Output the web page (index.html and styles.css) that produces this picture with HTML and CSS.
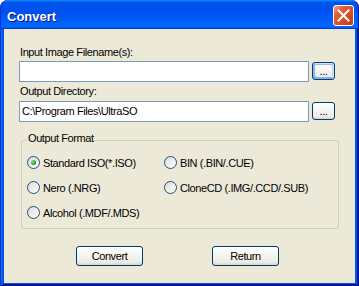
FILE: index.html
```html
<!DOCTYPE html>
<html>
<head>
<meta charset="utf-8">
<title>Convert</title>
<link rel="stylesheet" href="styles.css">
</head>
<body>
<div class="window">
  <div class="titlebar">
    <span class="title">Convert</span>
    <button class="close" aria-label="Close">
      <svg width="19" height="19" viewBox="0 0 19 19"><path d="M4.5 4.5 L14.5 14.5 M14.5 4.5 L4.5 14.5" stroke="#fff" stroke-width="2" stroke-linecap="square" fill="none"/></svg>
    </button>
  </div>
  <div class="frame">
    <div class="client">
      <div class="label l1">Input Image Filename(s):</div>
      <div class="field-row">
        <div class="textbox"></div>
        <button class="btn browse focused">...</button>
      </div>
      <div class="label l2">Output Directory:</div>
      <div class="field-row">
        <div class="textbox">C:\Program Files\UltraSO</div>
        <button class="btn browse">...</button>
      </div>
      <fieldset class="group">
        <legend>Output Format</legend>
        <div class="options">
          <label class="option"><span class="radio checked"></span>Standard ISO(*.ISO)</label>
          <label class="option"><span class="radio"></span>BIN (.BIN/.CUE)</label>
          <label class="option"><span class="radio"></span>Nero (.NRG)</label>
          <label class="option"><span class="radio"></span>CloneCD (.IMG/.CCD/.SUB)</label>
          <label class="option"><span class="radio"></span>Alcohol (.MDF/.MDS)</label>
        </div>
      </fieldset>
      <div class="actions">
        <button class="btn action">Convert</button>
        <button class="btn action">Return</button>
      </div>
    </div>
  </div>
</div>
</body>
</html>
```

FILE: styles.css
```css
body {
  margin: 0;
  background: #fff;
  font-family: "Liberation Sans", Arial, sans-serif;
  font-size: 11px;
  color: #000;
}

.window {
  width: 359px;
  height: 286px;
  display: flex;
  flex-direction: column;
}

.titlebar {
  flex: none;
  height: 29px;
  box-sizing: border-box;
  display: flex;
  justify-content: space-between;
  align-items: flex-start;
  padding: 0 5px 0 7px;
  border-radius: 8px 8px 0 0;
  background: linear-gradient(180deg, #0997ff, #0053ee 8%, #0050ee 40%, #0066ff 88%, #0066ff 93%, #005bff 95%, #003dd7 96%, #003dd7);
  box-shadow: inset 1px 0 #0831d9, inset -1px 0 #001ea0;
}

.title {
  margin-top: 9px;
  font-family: "Liberation Sans", Arial, sans-serif;
  font-weight: bold;
  font-size: 13px;
  line-height: 15px;
  color: #fff;
  text-shadow: 1px 1px #0f1089;
}

.close {
  margin-top: 5px;
  width: 21px;
  height: 21px;
  padding: 0;
  box-sizing: border-box;
  border: 1px solid #fff;
  border-radius: 3px;
  background: linear-gradient(135deg, #f0a58c 0%, #e2603a 28%, #d94a22 65%, #c23a14 100%);
  display: flex;
  align-items: center;
  justify-content: center;
}

.close svg {
  display: block;
}

.frame {
  flex: 1;
  display: flex;
  padding: 0 4px 3px;
  background: #0055e5;
  box-shadow: inset 1px 0 #0831d9, inset -1px -1px #00138c, inset 2px 0 #166aee, inset -2px -2px #001ea0;
}

.client {
  flex: 1;
  background: #ece9d8;
  padding: 17px 0 0 15px;
  display: flex;
  flex-direction: column;
  align-items: flex-start;
  letter-spacing: -0.4px;
}

.label {
  line-height: 13px;
  padding-left: 1px;
}

.l1 {
  margin-bottom: 2px;
}

.l2 {
  margin: 3px 0;
}

.field-row {
  display: flex;
  align-items: flex-start;
  gap: 3px;
}

.textbox {
  width: 290px;
  height: 21px;
  box-sizing: border-box;
  border: 1px solid #7f9db9;
  background: #fff;
  padding: 3px 2px;
  line-height: 13px;
  white-space: nowrap;
}

.btn {
  font-family: "Liberation Sans", Arial, sans-serif;
  font-size: 11px;
  letter-spacing: inherit;
  line-height: 13px;
  color: #000;
  padding: 0;
  box-sizing: border-box;
  border: 1px solid #003c74;
  border-radius: 3px;
  background: linear-gradient(180deg, #ffffff, #ecebe5 86%, #d8d0c4);
}

.browse {
  width: 23px;
  height: 18px;
  margin-top: 1px;
}

.focused {
  box-shadow: inset -1px 1px #cee7ff, inset 1px 2px #98b8ea, inset -2px 2px #bcd4f6, inset 1px -1px #89ade4, inset 2px -2px #89ade4;
}

.group {
  margin: 10px 0 0 2px;
  width: 318px;
  box-sizing: border-box;
  border: 1px solid #d0d0bf;
  border-radius: 3px;
  padding: 2px 0 3px 5px;
  min-inline-size: 0;
}

.group legend {
  padding: 0 1px 3px;
  line-height: 13px;
}

.options {
  display: grid;
  grid-template-columns: 137px auto;
  grid-auto-rows: 25px;
}

.option {
  display: flex;
  align-items: center;
  gap: 3px;
  white-space: nowrap;
}

.radio {
  flex: none;
  width: 13px;
  height: 13px;
  box-sizing: border-box;
  border-radius: 50%;
  border: 1px solid #1c5180;
  background: linear-gradient(135deg, #dcdcd7, #ffffff);
  display: flex;
  align-items: center;
  justify-content: center;
}

.radio.checked::after {
  content: "";
  width: 5px;
  height: 5px;
  border-radius: 50%;
  background: radial-gradient(circle at 35% 35%, #8be38a, #21a121 60%, #198a19);
}

.actions {
  display: flex;
  gap: 69px;
  margin: 17px 0 0 57px;
}

.action {
  width: 67px;
  height: 20px;
}
```
